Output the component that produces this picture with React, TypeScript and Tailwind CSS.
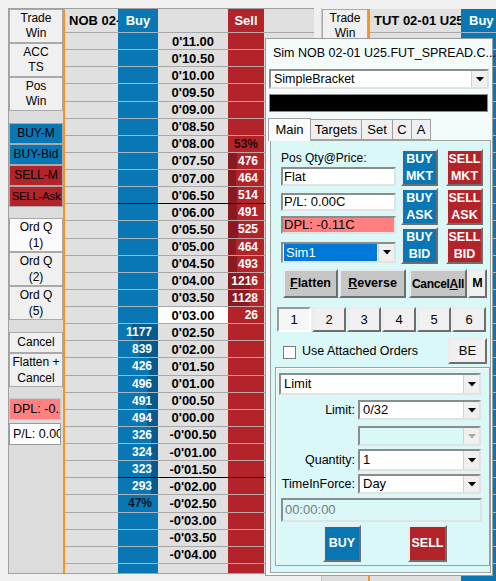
import React from "react";

// Price ladder: 0'11.00 down to -0'04.00 in half ticks
const PRICES = Array.from({ length: 31 }, (_, i) => 22 - i);

function fmtPrice(half: number) {
  const v = (Math.abs(half) / 2).toFixed(2).padStart(5, "0");
  return (half < 0 ? "-" : "") + "0'" + v;
}

const SELL: Record<number, string> = {
  6: "53%", 7: "476", 8: "464", 9: "514", 10: "491", 11: "525",
  12: "464", 13: "493", 14: "1216", 15: "1128", 16: "26",
};
const BUY: Record<number, string> = {
  17: "1177", 18: "839", 19: "426", 20: "496", 21: "491", 22: "494",
  23: "326", 24: "324", 25: "323", 26: "293", 27: "47%",
};
const LAST_INDEX = 16;
const BLACK_LINES = [9, 25];

const raised =
  "border-2 border-t-[#ececec] border-l-[#ececec] border-r-[#6e6e6e] border-b-[#6e6e6e]";
const sunken =
  "border-2 border-t-[#8c8c8c] border-l-[#8c8c8c] border-r-[#e2e2e2] border-b-[#e2e2e2]";

function Arrow({ disabled }: { disabled?: boolean }) {
  return (
    <svg width="8" height="5" viewBox="0 0 8 5">
      <path d="M0 0h8L4 4.5z" fill={disabled ? "#a8a8a8" : "#000"} />
    </svg>
  );
}

function Combo({
  value,
  className = "",
  disabled,
  selected,
}: {
  value?: string;
  className?: string;
  disabled?: boolean;
  selected?: boolean;
}) {
  return (
    <div className={`flex ${sunken} ${disabled ? "bg-[#dbf8f8]" : "bg-white"} ${className}`}>
      <div className="flex-1 flex items-center px-[1px] min-w-0">
        {selected ? (
          <span className="flex-1 h-full flex items-center bg-[#0078d7] text-white px-[2px]">{value}</span>
        ) : (
          <span className="px-[2px] truncate">{value}</span>
        )}
      </div>
      <div className="w-[16px] bg-[#f0f0f0] border-l border-[#d0d0d0] flex items-center justify-center">
        <Arrow disabled={disabled} />
      </div>
    </div>
  );
}

function LeftBtn({ children, className = "" }: { children: React.ReactNode; className?: string }) {
  return (
    <div
      className={`flex items-center justify-center text-center leading-[15px] whitespace-nowrap border border-[#a9a9a9] ${className}`}
    >
      {children}
    </div>
  );
}

function Column({
  className,
  header,
  cell,
  black,
  line = "border-[#a8a8a8]",
}: {
  className: string;
  header?: React.ReactNode;
  cell?: (idx: number, half: number) => React.ReactNode;
  black?: boolean;
  line?: string;
}) {
  return (
    <div className={`flex flex-col shrink-0 ${className}`}>
      <div className={`h-[24px] border-b ${line} flex items-center overflow-hidden`}>{header}</div>
      {PRICES.map((half, i) => (
        <div
          key={half}
          className={`h-[17.13px] border-b relative ${
            black && BLACK_LINES.includes(i) ? "border-black" : line
          }`}
        >
          {cell?.(i, half)}
        </div>
      ))}
    </div>
  );
}

function Ladder() {
  return (
    <div className="flex font-bold">
      <Column
        className="w-[53px] bg-[#e0e0e0]"
        header={<span className="pl-[4px] text-[13px] whitespace-nowrap">NOB 02-</span>}
      />
      <Column
        className="w-[40px] bg-[#0877b3]"
        line="border-[#a9b7c1]"
        black
        header={<span className="w-full text-center text-white text-[13px]">Buy</span>}
        cell={(i) => {
          const v = BUY[i];
          if (!v) return null;
          const pct = v.endsWith("%");
          return (
            <>
              {!pct && (
                <div
                  className="absolute right-0 top-0 bottom-0 bg-[#065b8c]"
                  style={{ width: Math.round(Number(v) / 45) }}
                />
              )}
              <div
                className={`relative h-full flex items-center justify-end pr-[6px] text-[12px] leading-none ${
                  pct ? "text-[#0b1826]" : "text-white"
                }`}
              >
                {v}
              </div>
            </>
          );
        }}
      />
      <Column
        className="w-[70px] bg-[#e0e0e0]"
        black
        cell={(i, half) => (
          <div
            className={`h-full flex items-center justify-center text-[13px] leading-none text-black ${
              i === LAST_INDEX ? "bg-white" : ""
            }`}
          >
            {fmtPrice(half)}
          </div>
        )}
      />
      <Column
        className="w-[36px] bg-[#b2242a]"
        line="border-[#c0a5a6]"
        black
        header={<span className="w-full text-center text-white text-[13px]">Sell</span>}
        cell={(i) => {
          const v = SELL[i];
          if (!v) return null;
          const pct = v.endsWith("%");
          return (
            <>
              {!pct && (
                <div
                  className="absolute left-0 top-0 bottom-0 bg-[#8a1a1f]"
                  style={{ width: Math.round(Number(v) / 55) }}
                />
              )}
              <div
                className={`relative h-full flex items-center justify-end pr-[6px] text-[12px] leading-none ${
                  pct ? "text-[#2a0808]" : "text-white"
                }`}
              >
                {v}
              </div>
            </>
          );
        }}
      />
      <Column className="w-[50px] bg-[#e0e0e0]" black />
    </div>
  );
}

function OrderDialog() {
  return (
    <div className="absolute left-[265px] top-[38px] w-[228px] h-[538px] bg-[#f3fbfb] border border-[#9c9c9c] flex flex-col text-black">
      <div className="h-[29px] flex items-center pl-[7px] shrink-0">
        <span className="flex-1 text-[12.5px] whitespace-nowrap">Sim NOB 02-01 U25.FUT_SPREAD.C...</span>
        <span className="w-[18px] h-[18px] mt-[1px] bg-[#c75050] text-white text-[11px] font-bold flex items-center justify-center">
          x
        </span>
      </div>
      <Combo value="SimpleBracket" className="ml-[3px] mt-[1px] w-[220px] h-[20px] text-[12.5px]" />
      <div className="ml-[3px] mt-[5px] w-[219px] h-[18px] bg-black border border-[#8c8c8c]" />

      {/* tab strip */}
      <div className="ml-[2px] mt-[5px] h-[23px] flex items-end text-[13px] relative z-10">
        <div className="w-[43px] h-[23px] bg-[#fbfbfb] border border-b-0 border-[#a0a0a0] flex items-center justify-center -mb-[1px] pb-[1px]">
          Main
        </div>
        <div className="w-[51px] h-[21px] bg-[#f0f0f0] border border-l-0 border-[#a0a0a0] flex items-center justify-center">
          Targets
        </div>
        <div className="w-[31px] h-[21px] bg-[#f0f0f0] border border-l-0 border-[#a0a0a0] flex items-center justify-center">
          Set
        </div>
        <div className="w-[19px] h-[21px] bg-[#f0f0f0] border border-l-0 border-[#a0a0a0] flex items-center justify-center">
          C
        </div>
        <div className="w-[19px] h-[21px] bg-[#f0f0f0] border border-l-0 border-[#a0a0a0] flex items-center justify-center">
          A
        </div>
      </div>

      <div className="ml-[4px] w-[221px] h-[433px] bg-[#dbf8f8] border border-[#a0a0a0] flex flex-col">
        {/* position + market buttons */}
        <div className="flex pl-[10px] pt-[8px] gap-[5px]">
          <div className="w-[115px] flex flex-col">
            <div className="h-[18px] text-[12px] flex items-center">Pos Qty@Price:</div>
            <div className={`h-[19px] bg-white ${sunken} text-[13px] flex items-center pl-[1px]`}>Flat</div>
            <div className={`mt-[7px] h-[18px] bg-white ${sunken} text-[13px] flex items-center pl-[1px]`}>
              P/L: 0.00C
            </div>
            <div className={`mt-[5px] h-[18px] bg-[#ff8080] ${sunken} text-[13px] flex items-center pl-[1px]`}>
              DPL: -0.11C
            </div>
            <Combo value="Sim1" selected className="mt-[8px] h-[21px] text-[13px]" />
          </div>
          <div className="grid grid-cols-[37px_37px] gap-x-[8px] gap-y-[2px] text-white font-bold text-[12.5px] leading-[17px] text-center">
            {[
              ["BUY", "MKT"],
              ["SELL", "MKT"],
              ["BUY", "ASK"],
              ["SELL", "ASK"],
              ["BUY", "BID"],
              ["SELL", "BID"],
            ].map(([a, b], i) => (
              <div
                key={i}
                className={`h-[37px] flex flex-col items-center justify-center ${raised} ${
                  a === "BUY" ? "bg-[#0877b3]" : "bg-[#b2242a]"
                }`}
              >
                <span>{a}</span>
                <span>{b}</span>
              </div>
            ))}
          </div>
        </div>

        {/* flatten / reverse / cancel */}
        <div className="flex ml-[12px] mt-[5px] h-[29px] text-[12.5px] font-bold">
          <div className={`w-[55px] bg-[#c6c6c6] ${raised} flex items-center justify-center`}>
            <span className="underline">F</span>latten
          </div>
          <div className={`ml-[1px] w-[67px] bg-[#c6c6c6] ${raised} flex items-center justify-center`}>
            <span className="underline">R</span>everse
          </div>
          <div className={`ml-[3px] w-[58px] bg-[#c6c6c6] ${raised} flex items-center justify-center whitespace-nowrap text-[12px] tracking-[-0.3px]`}>
            Cancel<span className="underline">A</span>ll
          </div>
          <div className={`ml-[1px] w-[19px] bg-[#f0f0f0] ${raised} flex items-center justify-center`}>M</div>
        </div>

        {/* quick quantity buttons */}
        <div className="flex ml-[6px] mt-[9px] h-[25px] gap-[1px] text-[13px]">
          {["1", "2", "3", "4", "5", "6"].map((n) => (
            <div
              key={n}
              className={`w-[34px] flex items-center justify-center ${
                n === "1"
                  ? "bg-[#f6f6f6] border-2 border-t-[#9a9a9a] border-l-[#9a9a9a] border-r-white border-b-white"
                  : `bg-[#f0f0f0] ${raised}`
              }`}
            >
              {n}
            </div>
          ))}
        </div>

        <div className="flex items-center ml-[12px] mt-[6px] h-[26px]">
          <div className="w-[13px] h-[13px] bg-white border border-[#7a7a7a] mt-[2px]" />
          <span className="ml-[6px] text-[12.5px] mt-[1px]">Use Attached Orders</span>
          <div className={`ml-auto mr-[3px] w-[39px] h-[26px] bg-[#f0f0f0] ${raised} flex items-center justify-center text-[13px]`}>
            BE
          </div>
        </div>

        {/* order entry group */}
        <div className="ml-[4px] mt-[3px] w-[215px] h-[199px] border border-[#a0a0a0] shadow-[inset_1px_1px_0_#fff] flex flex-col text-[13px]">
          <Combo value="Limit" className="ml-[3px] mt-[5px] w-[202px] h-[22px]" />
          <div className="flex items-center mt-[5px] h-[20px]">
            <span className="w-[80px] text-right pr-[1px] text-[12.5px]">Limit:</span>
            <Combo value="0/32" className="ml-[2px] w-[123px] h-[20px]" />
          </div>
          <Combo disabled className="ml-[82px] mt-[6px] w-[123px] h-[20px]" />
          <div className="flex items-center mt-[3px] h-[22px]">
            <span className="w-[80px] text-right pr-[1px] text-[12.5px]">Quantity:</span>
            <Combo value="1" className="ml-[2px] w-[123px] h-[22px]" />
          </div>
          <div className="flex items-center mt-[3px] h-[20px]">
            <span className="w-[80px] text-right pr-[1px] text-[12.5px] whitespace-nowrap">TimeInForce:</span>
            <Combo value="Day" className="ml-[2px] w-[123px] h-[20px]" />
          </div>
          <div className={`ml-[5px] mt-[4px] w-[201px] h-[24px] ${sunken} flex items-center pl-[2px] text-[#7a7a7a]`}>
            00:00:00
          </div>
          <div className="flex mt-[3px] text-white font-bold text-[12.5px]">
            <div className={`ml-[47px] w-[38px] h-[37px] bg-[#0877b3] ${raised} flex items-center justify-center`}>BUY</div>
            <div className={`ml-[47px] w-[39px] h-[37px] bg-[#b2242a] ${raised} flex items-center justify-center`}>SELL</div>
          </div>
        </div>
      </div>
    </div>
  );
}

export default function App() {
  return (
    <div className="relative w-[496px] h-[581px] overflow-hidden bg-[#f0f0f0] font-['Liberation_Sans',Arial,sans-serif] text-black">
      <div className="flex pt-[8px] pl-[8px]">
        {/* NOB ladder window */}
        <div className="flex h-[566px] border-l border-t border-b border-[#a0a0a0]">
          <div className="w-[54px] bg-[#dcdcdc] flex flex-col text-[12px]">
            <LeftBtn className="h-[34px] bg-[#f0f0f0]">Trade<br />Win</LeftBtn>
            <LeftBtn className="h-[34px] bg-[#f0f0f0]">ACC<br />TS</LeftBtn>
            <LeftBtn className="h-[34px] bg-[#f0f0f0]">Pos<br />Win</LeftBtn>
            <div className="h-[12px]" />
            <LeftBtn className="h-[21px] bg-[#0877b3]">BUY-M</LeftBtn>
            <LeftBtn className="h-[21px] bg-[#0877b3]">BUY-Bid</LeftBtn>
            <LeftBtn className="h-[21px] bg-[#b2242a]">SELL-M</LeftBtn>
            <LeftBtn className="h-[21px] bg-[#b2242a] text-[11.5px] tracking-[-0.3px]">SELL-Ask</LeftBtn>
            <div className="h-[11px]" />
            <LeftBtn className="h-[34px] bg-[#fafafa] leading-[16px]">Ord Q<br />(1)</LeftBtn>
            <LeftBtn className="h-[34px] bg-[#f0f0f0] leading-[16px]">Ord Q<br />(2)</LeftBtn>
            <LeftBtn className="h-[34px] bg-[#f0f0f0] leading-[16px]">Ord Q<br />(5)</LeftBtn>
            <div className="h-[12px]" />
            <LeftBtn className="h-[21px] bg-[#f0f0f0]">Cancel</LeftBtn>
            <LeftBtn className="h-[34px] bg-[#f0f0f0] leading-[16px]">Flatten +<br />Cancel</LeftBtn>
            <div className="h-[11px]" />
            <div className="h-[22px] mr-[2px] bg-[#ff8080] border border-[#c8c8c8] flex items-center pl-[3px] text-[12.5px] whitespace-nowrap overflow-hidden">
              DPL: -0.1
            </div>
            <div className="mt-[3px] h-[22px] mr-[2px] bg-white border border-[#9a9a9a] flex items-center pl-[3px] text-[12.5px] whitespace-nowrap overflow-hidden">
              P/L: 0.000
            </div>
          </div>
          <div className="w-[2px] bg-[#f7941d]" />
          <Ladder />
        </div>

        {/* window gap */}
        <div className="w-[8px] border-r border-[#c4c4c4]" />

        {/* TUT ladder window (mostly hidden) */}
        <div className="flex flex-1 h-[573px] pt-[1px] font-bold">
          <div className="w-[46px] bg-[#dcdcdc] flex flex-col">
            <div className="h-[34px] bg-[#f0f0f0] border border-[#a9a9a9] flex items-center justify-center text-center leading-[15px] text-[12px] font-normal">
              Trade<br />Win
            </div>
          </div>
          <div className="w-[2px] bg-[#f7941d]" />
          <div className="w-[91px] bg-[#e0e0e0]">
            <div className="h-[24px] border-b border-[#a8a8a8] flex items-center pl-[4px] text-[13px] whitespace-nowrap overflow-hidden">
              TUT 02-01 U25.
            </div>
          </div>
          <div className="flex-1 bg-[#0877b3] flex flex-col">
            <div className="h-[24px] border-b border-[#a9b7c1] flex items-center pl-[8px] text-white text-[13px]">
              Buy
            </div>
            {PRICES.map((h) => (
              <div key={h} className="h-[17.13px] border-b border-[#a9b7c1]" />
            ))}
          </div>
        </div>
      </div>

      <OrderDialog />
    </div>
  );
}
